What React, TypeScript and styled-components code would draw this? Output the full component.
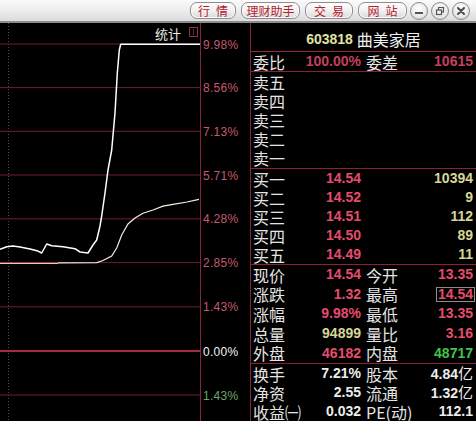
import React from "react";
import styled, { createGlobalStyle } from "styled-components";

const Global = createGlobalStyle`
  html, body { margin: 0; padding: 0; background: #000; }
  body { width: 476px; height: 421px; overflow: hidden; }
`;

const CJK = `"Noto Sans CJK SC", "Liberation Sans", sans-serif`;
const NUM = `"Liberation Sans", Arial, "Noto Sans CJK SC", sans-serif`;

const Window = styled.div`
  width: 476px;
  height: 421px;
  display: flex;
  flex-direction: column;
  background: #000;
  overflow: hidden;
`;

const TitleBar = styled.div`
  height: 21px;
  flex: none;
  display: flex;
  justify-content: flex-end;
  align-items: center;
  gap: 5px;
  padding-right: 6px;
  background: linear-gradient(#fbfbfb 0%, #eeeeee 45%, #dcdcdc 100%);
  border-bottom: 2px solid #8c8c8c;
`;

const PillButton = styled.div<{ $w: number; $spaced?: boolean }>`
  width: ${(p) => p.$w}px;
  height: 17px;
  box-sizing: border-box;
  border: 1px solid #8e8e8e;
  border-radius: 7px;
  background: linear-gradient(#ffffff 0%, #f1f1f1 50%, #d9d9d9 100%);
  box-shadow: inset 0 0 0 1px #fbfbfb;
  display: flex;
  align-items: center;
  justify-content: center;
  font-family: ${CJK};
  font-size: 12px;
  line-height: 1;
  color: #b4222e;
  letter-spacing: ${(p) => (p.$spaced ? "6px" : "0")};
  text-indent: ${(p) => (p.$spaced ? "6px" : "0")};
`;

const CircleButton = styled.div`
  width: 18px;
  height: 18px;
  box-sizing: border-box;
  border-radius: 50%;
  border: 1px solid #8a8a8a;
  background: radial-gradient(circle at 50% 35%, #ffffff 0%, #ececec 55%, #c8c8c8 100%);
  display: flex;
  align-items: center;
  justify-content: center;
  margin-left: -2px;
`;

const Main = styled.div`
  flex: 1;
  display: flex;
  min-height: 0;
`;

const ChartPanel = styled.div`
  width: 250px;
  flex: none;
`;

const QuotePanel = styled.div`
  flex: 1;
  border-left: 1px solid #8a2236;
  display: flex;
  flex-direction: column;
  min-height: 0;
`;

const StockTitle = styled.div`
  height: 29px;
  flex: none;
  box-sizing: border-box;
  padding-top: 3px;
  display: flex;
  align-items: center;
  justify-content: center;
  gap: 4px;
  border-bottom: 1px solid #962a40;
`;

const Code = styled.span`
  font-family: ${NUM};
  font-weight: bold;
  font-size: 14px;
  color: #e2e2a2;
`;

const Name = styled.span`
  font-family: ${CJK};
  font-size: 16px;
  color: #f0f0f0;
`;

const Section = styled.div<{ $h?: number; $last?: boolean }>`
  flex: ${(p) => (p.$h ? "none" : "1")};
  height: ${(p) => (p.$h ? `${p.$h}px` : "auto")};
  min-height: 0;
  border-bottom: ${(p) => (p.$last ? "none" : "1px solid #8a2236")};
  display: flex;
  flex-direction: column;
`;

const Row = styled.div`
  flex: 1;
  min-height: 0;
  display: grid;
  grid-template-columns: 36px 72px 42px 1fr;
  align-items: center;
  padding: 0 3px 0 2px;
`;

const Label = styled.span<{ $second?: boolean }>`
  font-family: ${CJK};
  font-size: 16px;
  line-height: 16px;
  color: #e4e4e4;
  white-space: nowrap;
  padding-left: ${(p) => (p.$second ? "5px" : "0")};
`;

const Value = styled.span<{ $c: string }>`
  font-family: ${NUM};
  font-weight: bold;
  font-size: 14px;
  line-height: 15px;
  color: ${(p) => p.$c};
  text-align: right;
  white-space: nowrap;
`;

const Boxed = styled.span`
  display: inline-block;
  border: 1px solid #8c8c8c;
  padding: 0 1px;
  margin-right: -2px;
  line-height: 13px;
`;

const Unit = styled.span`
  font-family: ${CJK};
  font-weight: normal;
  font-size: 15px;
`;

const RED = "#e64c6c";
const DRED = "#c4405e";
const YEL = "#d6d696";
const WHT = "#ececec";
const GRN = "#46c24a";

type Cell = { t: React.ReactNode; c?: string; boxed?: boolean };
type RowData = [string, Cell | null, string, Cell | null];

const sell: RowData[] = ["卖五", "卖四", "卖三", "卖二", "卖一"].map((l) => [l, null, "", null]);

const buy: RowData[] = [
  ["买一", { t: "14.54", c: RED }, "", { t: "10394", c: YEL }],
  ["买二", { t: "14.52", c: RED }, "", { t: "9", c: YEL }],
  ["买三", { t: "14.51", c: RED }, "", { t: "112", c: YEL }],
  ["买四", { t: "14.50", c: RED }, "", { t: "89", c: YEL }],
  ["买五", { t: "14.49", c: RED }, "", { t: "11", c: YEL }],
];

const quote: RowData[] = [
  ["现价", { t: "14.54", c: RED }, "今开", { t: "13.35", c: RED }],
  ["涨跌", { t: "1.32", c: RED }, "最高", { t: "14.54", c: RED, boxed: true }],
  ["涨幅", { t: "9.98%", c: RED }, "最低", { t: "13.35", c: RED }],
  ["总量", { t: "94899", c: YEL }, "量比", { t: "3.16", c: RED }],
  ["外盘", { t: "46182", c: RED }, "内盘", { t: "48717", c: GRN }],
];

const stats: RowData[] = [
  ["换手", { t: "7.21%", c: WHT }, "股本", { t: <>4.84<Unit>亿</Unit></>, c: WHT }],
  ["净资", { t: "2.55", c: WHT }, "流通", { t: <>1.32<Unit>亿</Unit></>, c: WHT }],
  ["收益㈠", { t: "0.032", c: WHT }, "PE(动)", { t: "112.1", c: WHT }],
];

function QuoteRow({ d }: { d: RowData }) {
  const [l1, v1, l2, v2] = d;
  return (
    <Row>
      <Label>{l1}</Label>
      <Value $c={v1?.c ?? WHT}>{v1?.t}</Value>
      <Label $second>{l2}</Label>
      <Value $c={v2?.c ?? WHT}>{v2?.boxed ? <Boxed>{v2.t}</Boxed> : v2?.t}</Value>
    </Row>
  );
}

const gridYs = [44, 87.6, 131.3, 175, 218.8, 262.6, 306.8, 351, 395];
const gridLabels: { t: string; c: string }[] = [
  { t: "9.98%", c: "#c45a6c" },
  { t: "8.56%", c: "#c45a6c" },
  { t: "7.13%", c: "#c45a6c" },
  { t: "5.71%", c: "#c45a6c" },
  { t: "4.28%", c: "#c45a6c" },
  { t: "2.85%", c: "#c45a6c" },
  { t: "1.43%", c: "#c45a6c" },
  { t: "0.00%", c: "#f2f2f2" },
  { t: "1.43%", c: "#6aa86a" },
];

const pricePts =
  "0,249.3 6.7,246.7 13,246 20,247 30,249 37,250.7 41.7,253 46.7,244 51.7,245.7 63,246.7 75,248.7 80,252 88,253 93,245 96.7,240 100,226 101.7,216 105,193 108,170 111.7,150 115,113 117.3,73 119.3,50 120.7,44.3 200,44.3";
const avgPts =
  "58,262.8 97,262.6 103,260.5 111.7,256 116.7,248 121.7,235 128,224 135,218 143,213.3 153,210 163,206.2 173,204.3 187,202 199,199.3";

function Chart() {
  return (
    <svg width="250" height="398" viewBox="0 23 250 398" style={{ display: "block" }}>
      <line x1="8.5" y1="23" x2="8.5" y2="421" stroke="#4a4a4a" strokeDasharray="1 2" />
      {gridYs.map((y, i) => (
        <line
          key={i}
          x1="0"
          x2="200"
          y1={y}
          y2={y}
          stroke={i === 7 ? "#a62a40" : "#6e1e2e"}
          strokeWidth={i === 7 ? 2 : 1}
        />
      ))}
      <line x1="200.5" y1="23" x2="200.5" y2="421" stroke="#8a2638" />
      {gridLabels.map((g, i) => (
        <text
          key={i}
          x="203"
          y={gridYs[i] + 4.5}
          fill={g.c}
          fontFamily="Liberation Sans, Arial, sans-serif"
          fontSize="12"
          letterSpacing="0.3"
        >
          {g.t}
        </text>
      ))}
      <text x="155" y="39" fill="#e8e8e8" fontFamily="Noto Sans CJK SC, sans-serif" fontSize="13">
        统计
      </text>
      <rect x="189.5" y="27.5" width="8" height="9" fill="none" stroke="#8a3444" />
      <line x1="193.5" y1="29" x2="193.5" y2="35" stroke="#5a2030" />
      <line x1="0" y1="263.3" x2="58" y2="263.3" stroke="#f6c4a6" strokeWidth="1.3" />
      <polyline points={avgPts} fill="none" stroke="#f2efe0" strokeWidth="1.2" />
      <polyline points={pricePts} fill="none" stroke="#ffffff" strokeWidth="1.5" strokeLinejoin="round" />
    </svg>
  );
}

export default function App() {
  return (
    <>
      <Global />
      <Window>
        <TitleBar>
          <PillButton $w={46} $spaced>行情</PillButton>
          <PillButton $w={59}>理财助手</PillButton>
          <PillButton $w={48} $spaced>交易</PillButton>
          <PillButton $w={49} $spaced>网站</PillButton>
          <CircleButton>
            <svg width="10" height="10" viewBox="0 0 10 10">
              <rect x="1" y="6" width="8" height="2" fill="#555" />
            </svg>
          </CircleButton>
          <CircleButton>
            <svg width="10" height="10" viewBox="0 0 10 10">
              <rect x="3.5" y="1.5" width="5" height="4.5" fill="none" stroke="#555" strokeWidth="1.2" />
              <rect x="1.5" y="4" width="5" height="4.5" fill="#f0f0f0" stroke="#555" strokeWidth="1.2" />
            </svg>
          </CircleButton>
          <CircleButton>
            <svg width="10" height="10" viewBox="0 0 10 10">
              <path d="M2 2 L8 8 M8 2 L2 8" stroke="#4a4a4a" strokeWidth="2" strokeLinecap="round" />
            </svg>
          </CircleButton>
        </TitleBar>
        <Main>
          <ChartPanel>
            <Chart />
          </ChartPanel>
          <QuotePanel>
            <StockTitle>
              <Code>603818</Code>
              <Name>曲美家居</Name>
            </StockTitle>
            <Section $h={19}>
              <QuoteRow d={["委比", { t: "100.00%", c: DRED }, "委差", { t: "10615", c: DRED }]} />
            </Section>
            <Section $h={96}>
              {sell.map((d, i) => (
                <QuoteRow key={i} d={d} />
              ))}
            </Section>
            <Section $h={95}>
              {buy.map((d, i) => (
                <QuoteRow key={i} d={d} />
              ))}
            </Section>
            <Section $h={98}>
              {quote.map((d, i) => (
                <QuoteRow key={i} d={d} />
              ))}
            </Section>
            <Section $last>
              {stats.map((d, i) => (
                <QuoteRow key={i} d={d} />
              ))}
            </Section>
          </QuotePanel>
        </Main>
      </Window>
    </>
  );
}
